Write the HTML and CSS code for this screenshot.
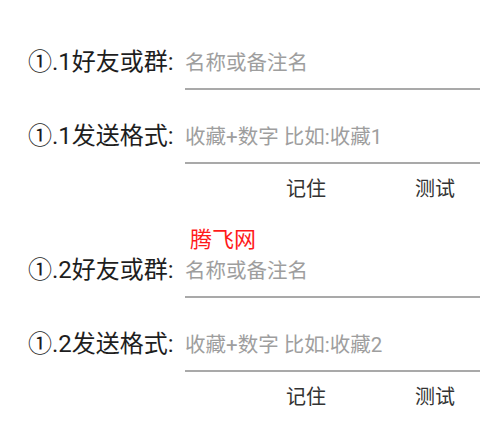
FILE: index.html
```html
<!DOCTYPE html>
<html lang="zh">
<head>
<meta charset="utf-8">
<link rel="stylesheet" href="styles.css">
</head>
<body>
<div class="page">
  <div class="row first">
    <div class="label">①.1好友或群:</div>
    <div class="input">名称或备注名</div>
  </div>
  <div class="row">
    <div class="label">①.1发送格式:</div>
    <div class="input">收藏+数字 比如:收藏1</div>
  </div>
  <div class="actions">
    <div class="btn">记住</div>
    <div class="btn">测试</div>
  </div>
  <div class="brand">腾飞网</div>
  <div class="row second">
    <div class="label">①.2好友或群:</div>
    <div class="input">名称或备注名</div>
  </div>
  <div class="row">
    <div class="label">①.2发送格式:</div>
    <div class="input">收藏+数字 比如:收藏2</div>
  </div>
  <div class="actions">
    <div class="btn">记住</div>
    <div class="btn">测试</div>
  </div>
</div>
</body>
</html>
```
FILE: styles.css
```css
html, body {
  margin: 0;
  padding: 0;
  background: #ffffff;
}
body {
  font-family: "Roboto", "Noto Sans CJK SC", sans-serif;
  color: #222;
}
.page {
  padding-top: 50px;
}
.row {
  display: flex;
  align-items: baseline;
  padding-left: 28px;
  padding-right: 13px;
  padding-top: 34px;
}
.row.first,
.row.second {
  padding-top: 0;
}
.label {
  width: 157px;
  flex: none;
  font-size: 24px;
  line-height: 20px;
  color: #1e1e1e;
  white-space: nowrap;
}
.input {
  flex: 1;
  font-size: 20.5px;
  line-height: 26px;
  color: #9e9e9e;
  padding-bottom: 12px;
  border-bottom: 2px solid #a9a9a9;
  white-space: nowrap;
}
.actions {
  display: flex;
  justify-content: flex-end;
  gap: 39px;
  padding-right: 13px;
  margin-top: 12px;
}
.btn {
  width: 90px;
  text-align: center;
  font-size: 20px;
  line-height: 26px;
  color: #333;
}
.brand {
  margin-top: 25px;
  margin-bottom: 5px;
  padding-left: 190px;
  font-size: 22px;
  line-height: 26px;
  color: #ff1a1a;
}
```
